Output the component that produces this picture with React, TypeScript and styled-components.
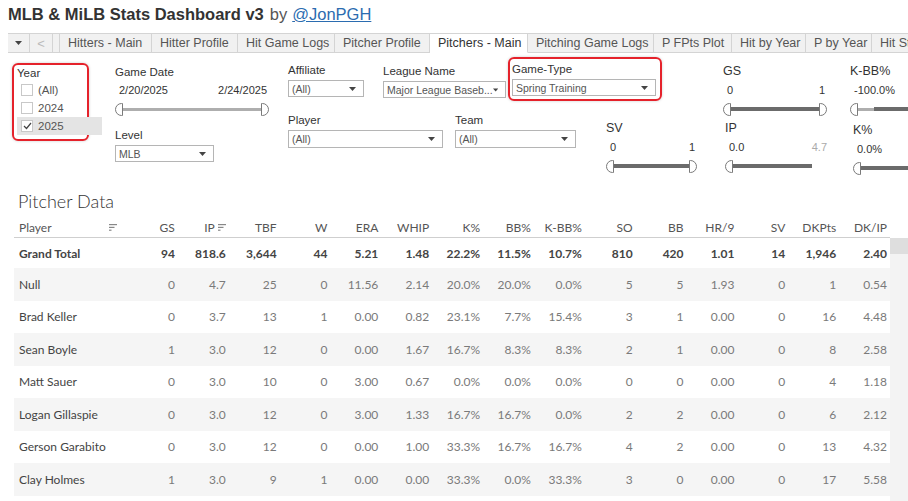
import React from "react";
import styled, { createGlobalStyle } from "styled-components";

const GlobalStyle = createGlobalStyle`
  html, body {
    margin: 0;
    padding: 0;
    background: #fff;
  }
  * {
    box-sizing: border-box;
  }
`;

const tabs: [string, number][] = [
  ["Hitters - Main", 92],
  ["Hitter Profile", 86],
  ["Hit Game Logs", 97],
  ["Pitcher Profile", 95],
  ["Pitchers - Main", 98],
  ["Pitching Game Logs", 126],
  ["P FPts Plot", 78],
  ["Hit by Year", 74],
  ["P by Year", 66],
  ["Hit Stats", 70],
];

const columns = ["GS", "IP", "TBF", "W", "ERA", "WHIP", "K%", "BB%", "K-BB%", "SO", "BB", "HR/9", "SV", "DKPts", "DK/IP"];

const grandTotal = ["94", "818.6", "3,644", "44", "5.21", "1.48", "22.2%", "11.5%", "10.7%", "810", "420", "1.01", "14", "1,946", "2.40"];

const rows: [string, string[]][] = [
  ["Null", ["0", "4.7", "25", "0", "11.56", "2.14", "20.0%", "20.0%", "0.0%", "5", "5", "1.93", "0", "1", "0.54"]],
  ["Brad Keller", ["0", "3.7", "13", "1", "0.00", "0.82", "23.1%", "7.7%", "15.4%", "3", "1", "0.00", "0", "16", "4.48"]],
  ["Sean Boyle", ["1", "3.0", "12", "0", "0.00", "1.67", "16.7%", "8.3%", "8.3%", "2", "1", "0.00", "0", "8", "2.58"]],
  ["Matt Sauer", ["0", "3.0", "10", "0", "3.00", "0.67", "0.0%", "0.0%", "0.0%", "0", "0", "0.00", "0", "4", "1.18"]],
  ["Logan Gillaspie", ["0", "3.0", "12", "0", "3.00", "1.33", "16.7%", "16.7%", "0.0%", "2", "2", "0.00", "0", "6", "2.12"]],
  ["Gerson Garabito", ["0", "3.0", "12", "0", "0.00", "1.00", "33.3%", "16.7%", "16.7%", "4", "2", "0.00", "0", "13", "4.32"]],
  ["Clay Holmes", ["1", "3.0", "9", "1", "0.00", "0.00", "33.3%", "0.0%", "33.3%", "3", "0", "0.00", "0", "17", "5.58"]],
];

const Caret = () => (
  <svg width="7" height="4" viewBox="0 0 7 4">
    <path d="M0 0 L7 0 L3.5 4 Z" fill="#444" />
  </svg>
);

const SortIcon = () => (
  <svg width="8" height="7" viewBox="0 0 8 7">
    <rect x="0" y="0" width="8" height="1.2" fill="#888" />
    <rect x="0" y="2.8" width="5.5" height="1.2" fill="#888" />
    <rect x="0" y="5.6" width="2.5" height="1.2" fill="#888" />
  </svg>
);

const Dropdown = ({ value, width, tall }: { value: string; width: number; tall?: boolean }) => (
  <Select $w={width} $tall={tall}>
    <span>{value}</span>
    <Caret />
  </Select>
);

type SliderProps = {
  width: number;
  low: string;
  high?: string;
  highMuted?: boolean;
  light?: boolean;
  rightHandle?: boolean;
  trackEnd?: number;
  muted?: number;
};

const Slider = ({ width, low, high, highMuted, light, rightHandle = true, trackEnd, muted }: SliderProps) => (
  <SliderBox $w={width}>
    <Range>
      <span>{low}</span>
      {high && <HighVal $muted={highMuted}>{high}</HighVal>}
    </Range>
    <TrackRow>
      <Handle $side="left" />
      {muted ? <Track $light style={{ flex: "none", width: muted }} /> : null}
      <Track $light={light} style={trackEnd ? { flex: "none", width: trackEnd } : undefined} />
      {rightHandle && <Handle $side="right" />}
    </TrackRow>
  </SliderBox>
);

export default function App() {
  return (
    <Page>
      <GlobalStyle />
      <Title>
        <b>MLB &amp; MiLB Stats Dashboard v3</b>
        <By>by</By>
        <Handle2>@JonPGH</Handle2>
      </Title>

      <TabBar>
        <TabCtl>
          <Caret />
        </TabCtl>
        <TabCtl $w={23}>
          <Chevron>&lt;</Chevron>
        </TabCtl>
        <TabCtl $w={7} />
        {tabs.map(([t, w]) => (
          <Tab key={t} $w={w} $active={t === "Pitchers - Main"}>
            {t}
          </Tab>
        ))}
      </TabBar>

      <Filters>
        <YearBox>
          <Label>Year</Label>
          <CheckRow>
            <Box />
            (All)
          </CheckRow>
          <CheckRow>
            <Box />
            2024
          </CheckRow>
          <CheckRow $selected>
            <Box>
              <svg width="9" height="8" viewBox="0 0 9 8">
                <path d="M1 4 L3.5 6.5 L8 1" stroke="#444" strokeWidth="1.2" fill="none" />
              </svg>
            </Box>
            2025
          </CheckRow>
        </YearBox>

        <DateCol>
          <Label>Game Date</Label>
          <Slider width={154} low="2/20/2025" high="2/24/2025" light />
          <LevelGroup>
            <Label>Level</Label>
            <Dropdown value="MLB" width={99} />
          </LevelGroup>
        </DateCol>

        <MidBlock>
          <MidRow>
            <Field $w={76}>
              <Label>Affiliate</Label>
              <Dropdown value="(All)" width={76} />
            </Field>
            <Field $w={123} $ml={19} $mt={1}>
              <Label>League Name</Label>
              <Dropdown value="Major League Baseb..." width={123} />
            </Field>
            <Highlight>
              <Label>Game-Type</Label>
              <Dropdown value="Spring Training" width={144} />
            </Highlight>
          </MidRow>
          <MidRow $second>
            <Field $w={155}>
              <Label>Player</Label>
              <Dropdown value="(All)" width={155} tall />
            </Field>
            <Field $w={121} $ml={12}>
              <Label>Team</Label>
              <Dropdown value="(All)" width={121} tall />
            </Field>
            <Field $w={93} $ml={30} $mt={8}>
              <SliderLabel>SV</SliderLabel>
              <Slider width={91} low="0" high="1" />
            </Field>
          </MidRow>
        </MidBlock>

        <SliderCol $ml={24} $w={106}>
          <Field $w={106}>
            <SliderLabel>GS</SliderLabel>
            <Slider width={104} low="0" high="1" />
          </Field>
          <Field $w={106} $mt={5} $ml={2}>
            <SliderLabel>IP</SliderLabel>
            <Slider width={104} low="0.0" high="4.7" highMuted rightHandle={false} trackEnd={79} />
          </Field>
        </SliderCol>

        <SliderCol $ml={21} $w={80}>
          <Field $w={80}>
            <SliderLabel>K-BB%</SliderLabel>
            <Slider width={80} low="-100.0%" muted={16} />
          </Field>
          <Field $w={80} $mt={7} $ml={3}>
            <SliderLabel>K%</SliderLabel>
            <Slider width={80} low="0.0%" />
          </Field>
        </SliderCol>
      </Filters>

      <TableSection>
        <SectionTitle>Pitcher Data</SectionTitle>
        <HeadRow>
          <HeadCell $left>
            <span>Player</span>
            <SortIcon />
          </HeadCell>
          {columns.map((c) => (
            <HeadCell key={c}>
              {c}
              {c === "IP" && <SortIcon />}
            </HeadCell>
          ))}
        </HeadRow>
        <BodyWrap>
          <Rows>
            <Row $total>
              <Cell $left $strong>Grand Total</Cell>
              {grandTotal.map((v, i) => (
                <Cell key={i} $strong>
                  {v}
                </Cell>
              ))}
            </Row>
            {rows.map(([name, vals], r) => (
              <Row key={name} $shade={r % 2 === 0}>
                <Cell $left $name>
                  {name}
                </Cell>
                {vals.map((v, i) => (
                  <Cell key={i}>{v}</Cell>
                ))}
              </Row>
            ))}
          </Rows>
          <Scrollbar>
            <Thumb />
          </Scrollbar>
        </BodyWrap>
      </TableSection>
    </Page>
  );
}

const Page = styled.div`
  width: 908px;
  height: 501px;
  overflow: hidden;
  background: #fff;
  font-family: "Liberation Sans", Arial, sans-serif;
  color: #333;
`;

const Title = styled.div`
  height: 33px;
  padding: 3px 0 0 8px;
  font-size: 16.5px;
  line-height: 22px;
  color: #333;
  white-space: nowrap;

  b {
    font-weight: bold;
  }
`;

const By = styled.span`
  margin-left: 6px;
  color: #555;
`;

const Handle2 = styled.span`
  margin-left: 5px;
  color: #2b6cb0;
  text-decoration: underline;
`;

const TabBar = styled.div`
  display: flex;
  height: 20px;
  margin-left: 8px;
  border-top: 1px solid #d4d4d4;
  background: #f1f1f1;
  white-space: nowrap;
`;

const TabCtl = styled.div<{ $w?: number }>`
  flex: none;
  width: ${(p) => p.$w ?? 22}px;
  display: flex;
  align-items: center;
  justify-content: center;
  border-right: 1px solid #d4d4d4;
  border-bottom: 1px solid #d4d4d4;
`;

const Chevron = styled.span`
  color: #bbb;
  font-size: 13px;
`;

const Tab = styled.div<{ $active?: boolean; $w: number }>`
  flex: none;
  width: ${(p) => p.$w}px;
  overflow: hidden;
  padding-left: 8px;
  font-size: 12.5px;
  line-height: 18px;
  color: ${(p) => (p.$active ? "#333" : "#555")};
  background: ${(p) => (p.$active ? "#fff" : "transparent")};
  border-right: 1px solid #d4d4d4;
  border-bottom: 1px solid ${(p) => (p.$active ? "#fff" : "#d4d4d4")};
`;

const Filters = styled.div`
  display: flex;
  align-items: flex-start;
  height: 133px;
  padding-left: 12px;
  white-space: nowrap;
`;

const Label = styled.div`
  font-size: 11.5px;
  line-height: 14px;
  color: #333;
`;

const SliderLabel = styled(Label)`
  font-size: 12.5px;
  line-height: 15px;
`;

const YearBox = styled.div`
  flex: none;
  width: 77px;
  height: 78px;
  margin-top: 10px;
  padding: 1px 0 0 3px;
  border: 2px solid #e5222b;
  border-radius: 6px;
  box-shadow: 0 0 3px rgba(0, 0, 0, 0.2);
  position: relative;
  z-index: 1;

  ${Label} {
    margin-bottom: 1px;
  }
`;

const CheckRow = styled.div<{ $selected?: boolean }>`
  display: flex;
  align-items: center;
  gap: 5px;
  width: 85px;
  height: 18px;
  padding-left: 4px;
  font-size: 11.5px;
  color: #555;
  background: ${(p) => (p.$selected ? "#e4e4e4" : "transparent")};
  position: relative;
  z-index: -1;
`;

const Box = styled.div`
  width: 12px;
  height: 12px;
  border: 1px solid #c8c8c8;
  background: #fff;
  display: flex;
  align-items: center;
  justify-content: center;
`;

const DateCol = styled.div`
  flex: none;
  width: 160px;
  margin: 12px 0 0 26px;
`;

const LevelGroup = styled.div`
  margin-top: 12px;

  ${Label} {
    margin-bottom: 3px;
  }
`;

const SliderBox = styled.div<{ $w: number }>`
  width: ${(p) => p.$w}px;
  margin-top: 4px;
`;

const Range = styled.div`
  display: flex;
  justify-content: space-between;
  padding: 0 2px 0 4px;
  font-size: 11px;
  line-height: 14px;
  color: #333;
`;

const HighVal = styled.span<{ $muted?: boolean }>`
  color: ${(p) => (p.$muted ? "#aaa" : "#333")};
`;

const TrackRow = styled.div`
  display: flex;
  align-items: center;
  height: 14px;
  margin-top: 5px;
`;

const Handle = styled.div<{ $side: "left" | "right" }>`
  flex: none;
  width: 8px;
  height: 13px;
  background: #fff;
  border: 1.5px solid #7a7a7a;
  border-radius: ${(p) => (p.$side === "left" ? "7px 0 0 7px" : "0 7px 7px 0")};
`;

const Track = styled.div<{ $light?: boolean }>`
  flex: 1;
  height: ${(p) => (p.$light ? 3 : 4)}px;
  background: ${(p) => (p.$light ? "#aeaeae" : "#6b6b6b")};
`;

const MidBlock = styled.div`
  flex: none;
  width: 411px;
  margin: 10px 0 0 13px;
`;

const MidRow = styled.div<{ $second?: boolean }>`
  display: flex;
  align-items: flex-start;
  margin-top: ${(p) => (p.$second ? "12px" : "0")};
`;

const Field = styled.div<{ $w: number; $ml?: number; $mt?: number }>`
  flex: none;
  width: ${(p) => p.$w}px;
  margin-left: ${(p) => p.$ml ?? 0}px;
  margin-top: ${(p) => p.$mt ?? 0}px;

  ${Label} {
    margin-bottom: 3px;
  }
`;

const Highlight = styled.div`
  flex: none;
  width: 154px;
  height: 44px;
  margin: -6px 0 0 2px;
  padding: 3px 0 0 2px;
  border: 2px solid #e5222b;
  border-radius: 6px;
  box-shadow: 0 0 3px rgba(0, 0, 0, 0.2);

  ${Label} {
    margin-bottom: 3px;
  }
`;

const Select = styled.div<{ $w: number; $tall?: boolean }>`
  width: ${(p) => p.$w}px;
  height: ${(p) => (p.$tall ? 18 : 17)}px;
  display: flex;
  align-items: center;
  justify-content: space-between;
  padding: 0 7px 0 3px;
  border: 1px solid #b5b5b5;
  background: #fff;
  font-size: 10.5px;
  color: #555;
  overflow: hidden;
`;

const SliderCol = styled.div<{ $ml: number; $w: number }>`
  flex: none;
  width: ${(p) => p.$w}px;
  margin: 11px 0 0 ${(p) => p.$ml}px;
`;

const TableSection = styled.div`
  padding-left: 14px;
  font-family: Lato, "Noto Sans", sans-serif;
`;

const SectionTitle = styled.div`
  height: 32px;
  padding: 3px 0 0 4px;
  font-size: 18px;
  font-weight: 300;
  line-height: 24px;
  color: #333;
`;

const grid = `
  display: grid;
  grid-template-columns: 113px repeat(15, 1fr);
  width: 876px;
`;

const HeadRow = styled.div`
  ${grid}
  height: 20px;
  border-bottom: 1px solid #cfcfcf;
`;

const HeadCell = styled.div<{ $left?: boolean }>`
  display: flex;
  align-items: center;
  justify-content: ${(p) => (p.$left ? "space-between" : "flex-end")};
  gap: 3px;
  padding: ${(p) => (p.$left ? "0 10px 0 5px" : "0 3px 0 0")};
  font-size: 12px;
  color: #555;
`;

const BodyWrap = styled.div`
  display: flex;
`;

const Rows = styled.div`
  width: 876px;
`;

const Row = styled.div<{ $shade?: boolean; $total?: boolean }>`
  ${grid}
  height: ${(p) => (p.$total ? 30 : 32.5)}px;
  align-items: center;
  background: ${(p) => (p.$shade ? "#f5f5f5" : "#fff")};
`;

const Cell = styled.div<{ $left?: boolean; $strong?: boolean; $name?: boolean }>`
  text-align: ${(p) => (p.$left ? "left" : "right")};
  padding: ${(p) => (p.$left ? "0 0 0 5px" : "0 3px 0 0")};
  font-size: 12px;
  font-weight: ${(p) => (p.$strong ? 700 : 400)};
  color: ${(p) => (p.$strong || p.$name ? "#444" : "#7a7a7a")};
  white-space: nowrap;
`;

const Scrollbar = styled.div`
  width: 18px;
  height: 270px;
  background: #f3f3f3;
`;

const Thumb = styled.div`
  height: 16px;
  background: #dedede;
`;
